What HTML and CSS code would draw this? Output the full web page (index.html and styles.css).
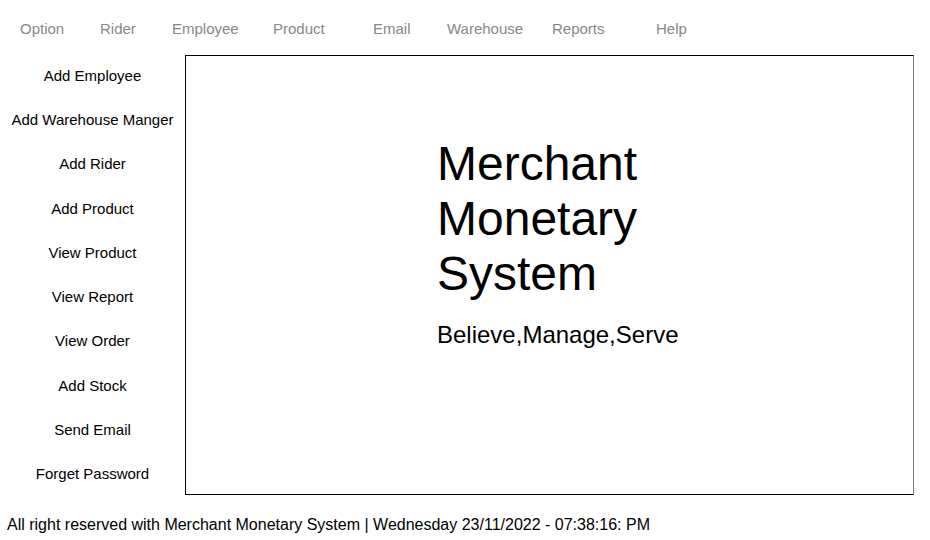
FILE: index.html
```html
<!DOCTYPE html>
<html lang="en">
<head>
<meta charset="utf-8">
<title>Merchant Monetary System</title>
<link rel="stylesheet" href="styles.css">
</head>
<body>
<nav class="menu">
  <span class="menu-item">Option</span>
  <span class="menu-item">Rider</span>
  <span class="menu-item">Employee</span>
  <span class="menu-item">Product</span>
  <span class="menu-item">Email</span>
  <span class="menu-item">Warehouse</span>
  <span class="menu-item">Reports</span>
  <span class="menu-item">Help</span>
</nav>
<main class="main">
  <aside class="sidebar">
    <span class="side-item">Add Employee</span>
    <span class="side-item">Add Warehouse Manger</span>
    <span class="side-item">Add Rider</span>
    <span class="side-item">Add Product</span>
    <span class="side-item">View Product</span>
    <span class="side-item">View Report</span>
    <span class="side-item">View Order</span>
    <span class="side-item">Add Stock</span>
    <span class="side-item">Send Email</span>
    <span class="side-item">Forget Password</span>
  </aside>
  <section class="panel">
    <h1 class="title">Merchant<br>Monetary<br>System</h1>
    <p class="tagline">Believe,Manage,Serve</p>
  </section>
</main>
<footer class="footer">All right reserved with Merchant Monetary System | Wednesday 23/11/2022 - 07:38:16: PM</footer>
</body>
</html>
```
FILE: styles.css
```css
html, body {
  margin: 0;
  padding: 0;
  background: #ffffff;
}
body {
  font-family: "Liberation Sans", Arial, sans-serif;
  color: #000000;
  width: 930px;
  height: 540px;
  overflow: hidden;
}
.menu {
  box-sizing: border-box;
  height: 53px;
  padding: 20px 0 0 20px;
  display: grid;
  grid-template-columns: 80px 72px 101px 100px 74px 105px 104px auto;
  font-size: 15px;
  color: #888888;
}
.menu-item {
  white-space: nowrap;
}
.main {
  display: flex;
  align-items: flex-start;
}
.sidebar {
  width: 185px;
  height: 443px;
  display: grid;
  grid-template-rows: repeat(10, 1fr);
  align-items: center;
  justify-items: center;
  font-size: 15px;
}
.side-item {
  white-space: nowrap;
}
.panel {
  box-sizing: border-box;
  margin-top: 2px;
  width: 729px;
  height: 440px;
  border: 1px solid #000000;
  border-right-color: #808080;
  padding: 80px 0 0 251px;
}
.title {
  margin: 0;
  font-size: 48px;
  font-weight: normal;
  line-height: normal;
}
.tagline {
  margin: 20px 0 0 0;
  font-size: 24px;
  line-height: normal;
}
.footer {
  padding: 20px 0 0 7px;
  font-size: 16px;
  white-space: nowrap;
}
```
